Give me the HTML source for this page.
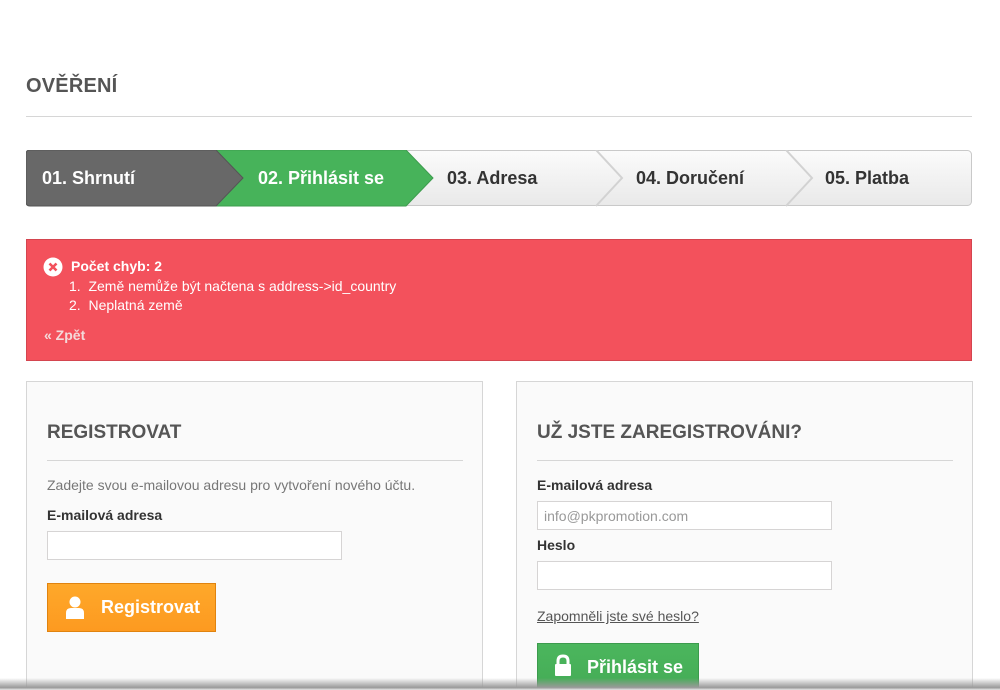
<!DOCTYPE html>
<html style="height:690px;overflow:hidden"><head><meta charset="utf-8"><style>
*{box-sizing:border-box}
body{margin:0;width:1000px;height:690px;overflow:hidden;background:#fff;font-family:"Liberation Sans",Arial,sans-serif;color:#333;position:relative}
.h1{position:absolute;left:26px;top:75px;font-size:20px;font-weight:bold;color:#555;letter-spacing:0.2px}
.rule{position:absolute;left:26px;top:116px;width:946px;height:1px;background:#d6d6d6}
.steps{position:absolute;left:26px;top:150px}
.err{position:absolute;left:26px;top:239px;width:946px;height:122px;background:#f3515c;border:1px solid #d4454f;color:#fff;font-size:14px}
.panel{position:absolute;top:381px;height:330px;background:#fafafa;border:1px solid #d6d6d6}
.ph{position:absolute;left:20px;top:40px;font-size:19px;font-weight:bold;color:#555}
.phr{position:absolute;left:20px;top:78px;width:416px;height:1px;background:#d6d6d6}
.txt{position:absolute;font-size:14px;color:#777}
.lbl{position:absolute;font-size:14px;font-weight:bold;color:#333}
.inp{position:absolute;width:295px;height:29px;background:#fff;border:1px solid #d6d4d4;font-size:14px;color:#999;padding:6px 6px}
.btn{position:absolute;color:#fff;font-weight:bold;font-size:18px}
.shadow{position:absolute;left:0;top:678px;width:1000px;height:12px;background:linear-gradient(#fff0,#9a9a9a 80%,#e8e8e8)}
</style></head><body>
<div class="h1">OVĚŘENÍ</div>
<div class="rule"></div>
<svg class="steps" width="947" height="57" viewBox="0 0 947 57">
<defs><linearGradient id="lg" x1="0" y1="0" x2="0" y2="1"><stop offset="0" stop-color="#fbfbfb"/><stop offset="1" stop-color="#e9e9e9"/></linearGradient></defs>
<rect x="0.5" y="0.5" width="945" height="55" rx="4" fill="url(#lg)" stroke="#c9c9c9"/>
<polyline points="570,0 596,28 570,56" fill="none" stroke="#d2d2d2" stroke-width="2"/>
<polyline points="760,0 786,28 760,56" fill="none" stroke="#d2d2d2" stroke-width="2"/>
<polygon points="190,0 380,0 407,28 380,56 190,56" fill="#47b35a" stroke="#3d9c4e"/>
<path d="M4,0 H190 L217,28 L190,56 H4 Q0,56 0,52 V4 Q0,0 4,0Z" fill="#686868" stroke="#555"/>
<g font-family="Liberation Sans, Arial, sans-serif" font-weight="bold" font-size="18">
<text x="16" y="34" fill="#fff">01. Shrnutí</text>
<text x="232" y="34" fill="#fff">02. Přihlásit se</text>
<text x="421" y="34" fill="#333">03. Adresa</text>
<text x="610" y="34" fill="#333">04. Doručení</text>
<text x="799" y="34" fill="#333">05. Platba</text>
</g></svg>
<div class="err">
<svg style="position:absolute;left:16px;top:17px" width="20" height="20" viewBox="0 0 20 20"><circle cx="10" cy="10" r="9.5" fill="#fff"/><path d="M6.5 6.5L13.5 13.5M13.5 6.5L6.5 13.5" stroke="#f3515c" stroke-width="2.6"/></svg>
<div style="position:absolute;left:44px;top:18px;font-weight:bold">Počet chyb: 2</div>
<div style="position:absolute;left:42px;top:38px">1.&nbsp; Země nemůže být načtena s address-&gt;id_country</div>
<div style="position:absolute;left:42px;top:57px">2.&nbsp; Neplatná země</div>
<div style="position:absolute;left:17px;top:87px;font-weight:bold;color:#f3dada">« Zpět</div>
</div>
<div class="panel" style="left:26px;width:457px">
<div class="ph">REGISTROVAT</div><div class="phr"></div>
<div class="txt" style="left:20px;top:95px">Zadejte svou e-mailovou adresu pro vytvoření nového účtu.</div>
<div class="lbl" style="left:20px;top:125px">E-mailová adresa</div>
<div class="inp" style="left:20px;top:149px"></div>
<div class="btn" style="left:20px;top:201px;width:169px;height:49px;background:linear-gradient(#fea82a,#fd9a20);border:1px solid #e0830f">
<svg style="position:absolute;left:17px;top:12px" width="20" height="24" viewBox="0 0 20 24"><circle cx="10" cy="6" r="5.5" fill="#fff"/><path d="M1 23 V17 Q1 12 6 12 H14 Q19 12 19 17 V23Z" fill="#fff"/></svg>
<span style="position:absolute;left:53px;top:13px">Registrovat</span></div>
</div>
<div class="panel" style="left:516px;width:457px">
<div class="ph">UŽ JSTE ZAREGISTROVÁNI?</div><div class="phr"></div>
<div class="lbl" style="left:20px;top:95px">E-mailová adresa</div>
<div class="inp" style="left:20px;top:119px">info@pkpromotion.com</div>
<div class="lbl" style="left:20px;top:155px">Heslo</div>
<div class="inp" style="left:20px;top:179px"></div>
<div class="txt" style="left:20px;top:226px;color:#555;text-decoration:underline">Zapomněli jste své heslo?</div>
<div class="btn" style="left:20px;top:261px;width:162px;height:60px;background:linear-gradient(#4bb65d,#43a954);border:1px solid #3c9b4d">
<svg style="position:absolute;left:16px;top:10px" width="18" height="24" viewBox="0 0 18 24"><path d="M4 11 V7 Q4 2 9 2 Q14 2 14 7 V11" fill="none" stroke="#fff" stroke-width="3"/><rect x="1" y="10" width="16" height="12" rx="1" fill="#fff"/></svg>
<span style="position:absolute;left:49px;top:13px">Přihlásit se</span></div>
</div>
<div class="shadow"></div>
</body></html>
